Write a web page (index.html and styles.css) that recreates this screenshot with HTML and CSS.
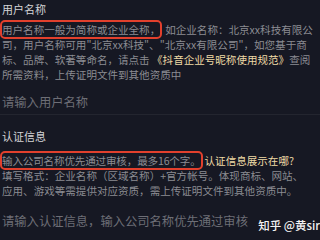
FILE: index.html
```html
<!DOCTYPE html>
<html lang="zh">
<head>
<meta charset="utf-8">
<link rel="stylesheet" href="styles.css">
</head>
<body>
<div class="page">
  <section class="field first">
    <div class="label">用户名称</div>
    <div class="desc">
      <div class="line"><span class="mark m1">用户名称一般为简称或企业全称，</span>如企业名称：北京xx科技有限公</div>
      <div class="line">司，用户名称可用"北京xx科技"、"北京xx有限公司"，如您基于商</div>
      <div class="line">标、品牌、软著等命名，请点击 <span class="gold">《抖音企业号昵称使用规范》</span>查阅</div>
      <div class="line">所需资料，上传证明文件到其他资质中</div>
    </div>
    <div class="input">请输入用户名称</div>
  </section>
  <section class="field second">
    <div class="label">认证信息</div>
    <div class="desc">
      <div class="line"><span class="mark m2">输入公司名称优先通过审核，最多16个字。</span><span class="gold q">认证信息展示在哪?</span></div>
      <div class="line">填写格式：企业名称（区域名称）+官方帐号。体现商标、网站、</div>
      <div class="line">应用、游戏等需提供对应资质，需上传证明文件到其他资质中。</div>
    </div>
    <div class="input">请输入认证信息，输入公司名称优先通过审核</div>
  </section>
  <div class="watermark">知乎 @黄sir</div>
</div>
</body>
</html>
```
FILE: styles.css
```css
html, body {
  margin: 0;
  padding: 0;
  background: #161823;
}
.page {
  position: relative;
  width: 320px;
  height: 240px;
  overflow: hidden;
  font-family: "Noto Sans CJK SC", "Noto Sans", sans-serif;
  color: #8b8c92;
}
.field {
  padding: 0 0 0 2px;
}
.first {
  padding-top: 2px;
  border-bottom: 1px solid #23252f;
  height: 115px;
  box-sizing: border-box;
}
.second {
  padding-top: 14px;
}
.label {
  font-size: 11px;
  line-height: 15px;
  color: #d4d4d7;
}
.desc {
  margin-top: 5px;
  font-size: 10.55px;
  line-height: 15px;
  white-space: nowrap;
}
.second .desc {
  margin-top: 9px;
}
.line {
  height: 15px;
}
.mark {
  outline: 2px solid #e2402d;
  outline-offset: 0px;
  border-radius: 3px;
}
.m1 {
  margin-right: 5px;
}
.m2 {
  letter-spacing: -0.15px;
}
.gold {
  color: #efdba6;
}
.q {
  margin-left: 4px;
}
.input {
  margin-top: 12px;
  font-size: 12.3px;
  line-height: 16px;
  color: #6d6e76;
  white-space: nowrap;
}
.second .input {
  margin-top: 15px;
}
.watermark {
  position: absolute;
  right: 0;
  bottom: 8px;
  font-size: 11.5px;
  line-height: 14px;
  color: #f2f2f2;
  font-weight: 500;
}
```
